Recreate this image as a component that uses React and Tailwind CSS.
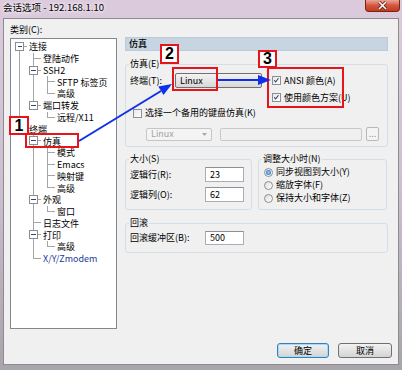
const TREE = [
  { t: "连接", l: 0, box: true, rails: [], last: false, first: true },
  { t: "登陆动作", l: 1, rails: [1], last: false },
  { t: "SSH2", l: 1, box: true, rails: [1], last: false },
  { t: "SFTP 标签页", l: 2, rails: [1, 1], last: false },
  { t: "高级", l: 2, rails: [1, 1], last: true },
  { t: "端口转发", l: 1, box: true, rails: [1], last: true },
  { t: "远程/X11", l: 2, rails: [1, 0], last: true },
  { t: "终端", l: 0, box: true, rails: [], last: true },
  { t: "仿真", l: 1, box: true, rails: [0], last: false },
  { t: "模式", l: 2, rails: [0, 1], last: false },
  { t: "Emacs", l: 2, rails: [0, 1], last: false },
  { t: "映射键", l: 2, rails: [0, 1], last: false },
  { t: "高级", l: 2, rails: [0, 1], last: true },
  { t: "外观", l: 1, box: true, rails: [0], last: false },
  { t: "窗口", l: 2, rails: [0, 1], last: true },
  { t: "日志文件", l: 1, rails: [0], last: false },
  { t: "打印", l: 1, box: true, rails: [0], last: false },
  { t: "高级", l: 2, rails: [0, 1], last: true },
  { t: "X/Y/Zmodem", l: 1, rails: [0], last: true, blue: true },
];

const H = 11.78;

function Gutter({ row }) {
  const w = 14 * (row.l + 1);
  const cy = H / 2;
  const cx = 6.5 + 14 * row.l;
  return (
    <svg width={w} height={H} viewBox={`0 0 ${w} ${H}`} className="shrink-0" shapeRendering="crispEdges">
      <g stroke="#a5a5a5" strokeWidth="1">
        {row.rails.map((r, k) =>
          r ? <line key={k} x1={6.5 + 14 * k} y1="0" x2={6.5 + 14 * k} y2={H} /> : null
        )}
        <line x1={cx} y1={row.first ? cy : 0} x2={cx} y2={row.last ? cy : H} />
        <line x1={cx} y1={cy} x2={w} y2={cy} />
      </g>
      {row.box && (
        <g>
          <rect x={cx - 4} y={cy - 4} width="8" height="8" fill="#fff" stroke="#8c8c8c" strokeWidth="1" />
          <line x1={cx - 2} y1={cy} x2={cx + 2.5} y2={cy} stroke="#2a4a80" strokeWidth="1" />
        </g>
      )}
    </svg>
  );
}

function Check({ checked }) {
  return (
    <span className="w-[9px] h-[9px] shrink-0 border border-[#8e8f8f] bg-linear-to-br from-[#e6e6e6] to-white flex items-center justify-center">
      {checked && (
        <svg width="9" height="9" viewBox="0 0 9 9">
          <path d="M1.5 4.2 L3.4 6.4 L7 1.6" fill="none" stroke="#24427e" strokeWidth="1.4" />
        </svg>
      )}
    </span>
  );
}

function Radio({ on }) {
  return (
    <span className="w-[9px] h-[9px] shrink-0 rounded-full border border-[#8e8f8f] bg-linear-to-br from-[#dcdcdc] to-white flex items-center justify-center">
      {on && <span className="w-[5px] h-[5px] rounded-full bg-radial from-[#8fd0ff] to-[#1e5fb8]" />}
    </span>
  );
}

function Field({ v, w = "w-[39px]", h = "h-[15px]" }) {
  return (
    <div className={`${w} ${h} bg-white border border-[#abadb3] border-t-[#8d9096] flex items-center pl-[4px]`}>{v}</div>
  );
}

function Legend({ children }) {
  return <legend className="ml-[3px] px-[1px] leading-[12px]">{children}</legend>;
}

export default function App() {
  return (
    <div className="w-[402px] h-[370px] overflow-hidden relative bg-linear-to-b from-[#dccadd] via-[#cdbfd0] to-[#a9a3ab] text-[9px] text-black font-['Noto_Sans_CJK_SC',sans-serif]">
      {/* title bar */}
      <div className="h-[18px] flex justify-between">
        <div className="pl-[3px] pt-[1px] leading-[12px] text-[9.5px] [text-shadow:0_0_5px_#fff,0_0_3px_#fff]">会话选项 - 192.168.1.10</div>
        <div className="w-[35px] h-[12px] mr-[2px] rounded-b-[4px] border border-[#7a2418] border-t-0 bg-linear-to-b from-[#e9a595] via-[#d4553e] to-[#c23a1c] flex items-center justify-center">
          <svg width="11" height="9" viewBox="0 0 11 9">
            <path d="M2 1 L9 8 M9 1 L2 8" stroke="#5a1a10" strokeWidth="3" />
            <path d="M2 1 L9 8 M9 1 L2 8" stroke="#fff" strokeWidth="1.6" />
          </svg>
        </div>
      </div>

      {/* client area */}
      <div className="ml-[3px] w-[396px] h-[347px] border border-[#8c8c8c] bg-[#f0f0f0] flex flex-col">
        <div className="h-[316px] flex">
          <div className="pl-[6px] pt-[5px]">
            <div className="leading-[12px]">类别(C):</div>
            <div className="mt-[2px] w-[107px] h-[291px] bg-white border border-[#828790] pl-[2px] pt-[2px]">
              {TREE.map((r, i) => (
                <div key={i} className="flex items-center h-[11.78px]">
                  <Gutter row={r} />
                  <span className={`ml-[2px] leading-[11px] whitespace-nowrap ${r.blue ? "text-[#23389a]" : ""}`}>{r.t}</span>
                </div>
              ))}
            </div>
          </div>

          <div className="ml-[8px] w-[263px]">
            <div className="mt-[18px] h-[14px] bg-[#c7d5e3] border border-[#bccbd9] flex items-center pl-[3px] font-medium">仿真</div>

            <fieldset className="mt-[7px] h-[89px] border border-[#d5dde5] rounded-[3px]">
              <Legend>仿真(E)</Legend>
              <div className="flex items-start">
                <div className="flex items-center mt-[3px] pl-[4px]">
                  <span className="w-[45px]">终端(T):</span>
                  <div className="w-[87px] h-[15px] border border-[#707070] rounded-[2px] bg-linear-to-b from-[#f3f3f3] to-[#d8d8d8] flex items-center pl-[4px]">Linux</div>
                </div>
                <div className="ml-[10px] mt-[2px]">
                  <div className="h-[17px] flex items-center gap-[3px]"><Check checked />ANSI 颜色(A)</div>
                  <div className="h-[17px] flex items-center gap-[3px]"><Check checked />使用颜色方案(U)</div>
                </div>
              </div>
              <div className="h-[14px] pl-[7px] flex items-center gap-[3px]"><Check />选择一个备用的键盘仿真(K)</div>
              <div className="mt-[7px] pl-[20px] flex items-center">
                <div className="w-[66px] h-[13px] border border-[#c5c5c5] rounded-[2px] bg-[#f4f4f4] text-[#a3a3a3] flex items-center justify-between pl-[4px] pr-[4px]">
                  Linux
                  <svg width="5" height="3" viewBox="0 0 5 3"><path d="M0 0 H5 L2.5 3 Z" fill="#a8a8a8" /></svg>
                </div>
                <div className="ml-[8px] w-[142px] h-[13px] border border-[#c8c8c8] rounded-[2px] bg-[#f0f0f0]" />
                <div className="ml-[4px] w-[13px] h-[14px] border border-[#b5b9bc] rounded-[2px] bg-[#f4f4f4] text-[#9a9a9a] flex items-end justify-center leading-[9px] pb-[2px]">...</div>
              </div>
            </fieldset>

            <div className="mt-[6px] flex">
              <fieldset className="w-[127px] h-[57px] border border-[#d5dde5] rounded-[3px]">
                <Legend>大小(S)</Legend>
                <div className="mt-[2px] pl-[4px] flex items-center">
                  <span className="w-[75px]">逻辑行(R):</span>
                  <Field v="23" />
                </div>
                <div className="mt-[5px] pl-[4px] flex items-center">
                  <span className="w-[75px]">逻辑列(O):</span>
                  <Field v="62" />
                </div>
              </fieldset>
              <fieldset className="ml-[6px] w-[129px] h-[57px] border border-[#d5dde5] rounded-[3px]">
                <Legend>调整大小时(N)</Legend>
                <div className="pl-[5px] pt-[0.5px]">
                  <div className="h-[13px] flex items-center gap-[3px]"><Radio on />同步视图到大小(Y)</div>
                  <div className="h-[13px] flex items-center gap-[3px]"><Radio />缩放字体(F)</div>
                  <div className="h-[13px] flex items-center gap-[3px]"><Radio />保持大小和字体(Z)</div>
                </div>
              </fieldset>
            </div>

            <fieldset className="mt-[7px] h-[36px] border border-[#d5dde5] rounded-[3px]">
              <Legend>回滚</Legend>
              <div className="mt-[2px] pl-[4px] flex items-center">
                <span className="w-[75px]">回滚缓冲区(B):</span>
                <Field v="500" h="h-[14px]" />
              </div>
            </fieldset>
          </div>
        </div>

        <div className="mt-[8px] flex justify-end pr-[6px] gap-[9px]">
          <div className="w-[52px] h-[15px] rounded-[3px] border border-[#3c7fb1] shadow-[inset_0_0_0_1px_#9edcf7] bg-linear-to-b from-[#f2f2f2] to-[#d4d4d4] flex items-center justify-center">确定</div>
          <div className="w-[54px] h-[15px] rounded-[3px] border border-[#707070] bg-linear-to-b from-[#f2f2f2] to-[#d4d4d4] flex items-center justify-center">取消</div>
        </div>
      </div>

      {/* annotations */}
      <div className="absolute left-[25px] top-[133px] w-[54px] h-[15px] border-2 border-[#e8141c]" />
      <div className="absolute left-[9px] top-[116px] w-[20px] h-[19px] border-2 border-[#e8141c] bg-white flex items-center justify-center text-[16px] font-bold font-['Liberation_Sans',sans-serif]">1</div>
      <div className="absolute left-[172px] top-[67px] w-[46px] h-[24px] border-2 border-[#e8141c]" />
      <div className="absolute left-[160px] top-[44px] w-[19px] h-[20px] border-2 border-[#e8141c] bg-white flex items-center justify-center text-[16px] font-bold font-['Liberation_Sans',sans-serif]">2</div>
      <div className="absolute left-[267px] top-[67px] w-[77px] h-[41px] border-2 border-[#e8141c]" />
      <div className="absolute left-[258px] top-[50px] w-[19px] h-[18px] border-2 border-[#e8141c] bg-white flex items-center justify-center text-[16px] font-bold font-['Liberation_Sans',sans-serif]">3</div>
      <svg className="absolute left-0 top-0 pointer-events-none" width="402" height="370">
        <line x1="79" y1="141" x2="161" y2="91" stroke="#1030e8" strokeWidth="2" />
        <polygon points="172,84 163.5,95.1 158.3,86.5" fill="#1030e8" />
        <line x1="218" y1="80" x2="259" y2="80" stroke="#1030e8" strokeWidth="2" />
        <polygon points="271,80 258,75 258,85" fill="#1030e8" />
      </svg>
    </div>
  );
}
